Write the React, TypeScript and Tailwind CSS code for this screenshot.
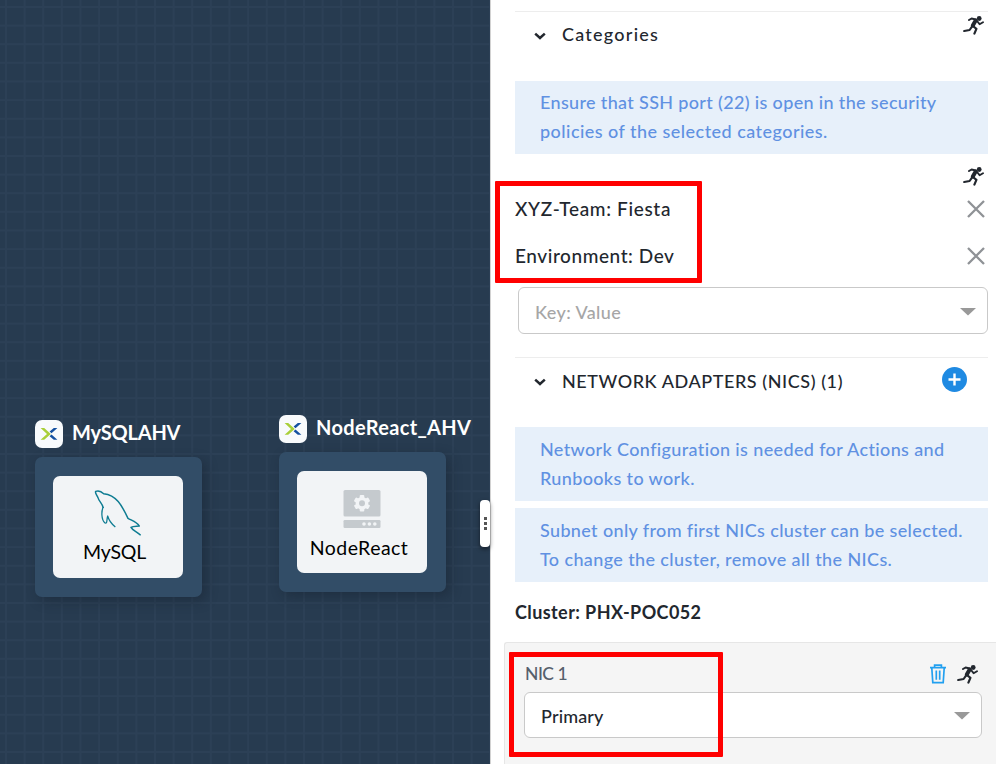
import type { ReactNode } from "react";

function Runner() {
  return (
    <svg width="21" height="19" viewBox="0 0 21 19" fill="none" stroke="#22272e" strokeLinecap="round" strokeLinejoin="round">
      <circle cx="16.2" cy="2.5" r="2.4" fill="#22272e" stroke="none" />
      <path d="M6 4 8.6 2.5 12.8 3.4" strokeWidth="2" />
      <path d="M12.7 4.6 9.8 9.6" strokeWidth="4" />
      <path d="M14 5 16.6 8.2 20 6.2" strokeWidth="1.9" />
      <path d="M10 10 13.4 12.8 11.4 17.6" strokeWidth="2.2" />
      <path d="M8.8 10.8 6.6 14 1.2 15" strokeWidth="2.1" />
    </svg>
  );
}

function Chevron() {
  return (
    <svg width="12" height="8" viewBox="0 0 12 8" fill="none" stroke="#22272e" strokeWidth="2.5">
      <path d="M1.2 1.6 6 6 10.8 1.6" />
    </svg>
  );
}

function Cross() {
  return (
    <svg className="-mt-[2px]" width="18" height="18" viewBox="0 0 18 18" fill="none" stroke="#8f9296" strokeWidth="2.3">
      <path d="M1 1 17 17M17 1 1 17" />
    </svg>
  );
}

function Caret() {
  return (
    <svg className="mt-[2px]" width="16" height="8" viewBox="0 0 16 8" fill="#999">
      <path d="M0 0H16L8 7.6Z" />
    </svg>
  );
}

function Trash() {
  return (
    <svg width="16" height="20" viewBox="0 0 16 20" fill="none" stroke="#22a0f0" strokeWidth="1.7">
      <path d="M0 3.6H16M4.6 3.4V1.2H11.4V3.4M1.8 4 2.8 18.6H13.2L14.2 4M6.3 6.6V15.8M9.7 6.6V15.8" />
    </svg>
  );
}

function BrandBadge() {
  return (
    <span className="flex size-7 shrink-0 items-center justify-center rounded-[7px] bg-[#f8fafc]">
      <svg width="28" height="28" viewBox="0 0 28 28">
        <path d="M5.6 8H9.2L15.8 13.9 9.2 19.8H5.6L12 13.9Z" fill="#a9cf38" />
        <path d="M22.4 8H18.8L14.6 11.6 16.5 13.2ZM22.4 19.8H18.8L14.6 16.2 16.5 14.6Z" fill="#1450a0" />
      </svg>
    </span>
  );
}

function Dolphin() {
  return (
    <svg width="50" height="48" viewBox="0 0 150 144" fill="none" stroke="#0e7c92" strokeWidth="4.4" strokeLinejoin="round">
      <path d="M31 57C28 42 18 38 15 26 12 18 5 12 8 7 16 4 25 7 32 14 70 18 86 48 105 88 118 95 132 99 139 111 129 112 120 111 114 115 119 125 132 128 143 139" />
      <path d="M31 54C25 64 24 92 36 102 44 104 40 94 44 81 49 99 57 106 67 114" strokeWidth="3.8" />
    </svg>
  );
}

function ServiceIcon() {
  return (
    <svg width="38" height="38" viewBox="0 0 38 38">
      <rect x="0.5" y="0" width="37" height="26.5" rx="1.6" fill="#c5cace" />
      <rect x="0.5" y="30" width="37" height="8" rx="1.2" fill="#c5cace" />
      <g fill="#f2f4f6">
        <circle cx="19" cy="13.3" r="6.3" />
        <rect x="16.7" y="5.1" width="4.6" height="16.4" rx="1" />
        <rect x="16.7" y="5.1" width="4.6" height="16.4" rx="1" transform="rotate(60 19 13.3)" />
        <rect x="16.7" y="5.1" width="4.6" height="16.4" rx="1" transform="rotate(120 19 13.3)" />
        <circle cx="21" cy="34" r="1.8" />
        <circle cx="26.4" cy="34" r="1.8" />
        <circle cx="31.8" cy="34" r="1.8" />
      </g>
      <circle cx="19" cy="13.3" r="3" fill="#c5cace" />
    </svg>
  );
}

function Node({ place, title, titleClass, name, nameClass, icon }: { place: string; title: string; titleClass: string; name: string; nameClass: string; icon: ReactNode }) {
  return (
    <div className={`absolute w-[167px] ${place}`}>
      <div className="flex h-7 items-center gap-[9px] whitespace-nowrap">
        <BrandBadge />
        <span className={`-mt-1 text-[20px] leading-6 font-bold text-white ${titleClass}`}>{title}</span>
      </div>
      <div className="mt-[9px] flex h-[140px] items-center justify-center rounded-[7px] bg-[#324d67] shadow-[4px_4px_12px_rgba(20,30,42,0.4)]">
        <div className="mr-px flex h-[102px] w-[130px] flex-col items-center rounded-[7px] bg-[#f2f4f6]">
          {icon}
          <span className={`text-[19.5px] leading-6 text-black ${nameClass}`}>{name}</span>
        </div>
      </div>
    </div>
  );
}

function Info({ children }: { children: ReactNode }) {
  return <div className="w-[473px] bg-[#e7f0fa] pl-[25px] text-[18px] leading-[29px] font-medium whitespace-nowrap text-[#6091e2]">{children}</div>;
}

export default function App() {
  return (
    <div className="relative flex h-[764px] w-[998px] overflow-hidden bg-white font-['Lato',sans-serif] [font-variant-ligatures:none]">
      <div className="relative w-[490px] shrink-0 bg-[#273b50] bg-[linear-gradient(to_right,#2c4056_2px,transparent_2px),linear-gradient(to_bottom,#2c4056_2px,transparent_2px)] [background-position:5px_6px] [background-size:18.64px_18.64px]">
        <Node place="top-[420px] left-[35px]" title="MySQLAHV" titleClass="tracking-[-0.2px]" name="MySQL" nameClass="mt-[3px] -ml-[7px] tracking-[-0.2px]"
          icon={<div className="mt-[13px] flex h-[48px]"><Dolphin /></div>} />
        <Node place="top-[415px] left-[279px]" title="NodeReact_AHV" titleClass="tracking-[0.33px]" name="NodeReact" nameClass="mt-[8px] -ml-[6px] tracking-[0.44px]"
          icon={<div className="mt-[19px] flex h-[38px]"><ServiceIcon /></div>} />
        <div className="absolute top-[500px] right-0 flex h-[47px] w-[10px] flex-col items-center justify-center gap-[2px] rounded-[4px] bg-white shadow-[0_2px_4px_rgba(0,0,0,0.5)]">
          <i className="size-[3px] bg-[#555]" />
          <i className="size-[3px] bg-[#555]" />
          <i className="size-[3px] bg-[#555]" />
        </div>
      </div>

      <div className="flex w-[508px] flex-col border-l border-[#d2d2d2] bg-white pt-[11px] text-[#22272e]">
        <section className="ml-6 flex h-[70px] w-[473px] items-start justify-between border-t border-[#ededed]">
          <div className="mt-[10px] ml-[19px] flex items-center gap-[16px]">
            <div className="mt-[3px]"><Chevron /></div>
            <h2 className="text-[18px] leading-6 font-medium tracking-[1.25px]">Categories</h2>
          </div>
          <div className="mt-1 mr-1"><Runner /></div>
        </section>
        <div className="ml-6 flex h-[73px] flex-col">
          <Info>
            <p className="pt-[7px] tracking-[0.34px]">Ensure that SSH port (22) is open in the security</p>
            <p className="pb-[8px] tracking-[0.46px]">policies of the selected categories.</p>
          </Info>
        </div>
        <div className="mt-[13px] flex h-[19px] justify-end pr-[14px]"><Runner /></div>
        <div className="ml-6 flex h-[47px] w-[470px] items-center justify-between text-[19px] font-medium">
          <span className="tracking-[0.66px]">XYZ-Team: Fiesta</span><Cross />
        </div>
        <div className="ml-6 flex h-[47px] w-[470px] items-center justify-between text-[19px] font-medium">
          <span className="tracking-[0.57px]">Environment: Dev</span><Cross />
        </div>
        <div className="mt-[7px] ml-[27px] flex h-[47px] w-[470px] items-center justify-between rounded-[6px] border border-[#c9c9c9] pr-[11px] pl-4">
          <span className="mt-[3px] text-[18px] font-medium tracking-[0.4px] text-[#a6a6a6]">Key: Value</span><Caret />
        </div>
        <section className="mt-[23px] ml-6 flex h-[70px] w-[473px] items-start justify-between border-t border-[#ededed]">
          <div className="mt-[11px] ml-[19px] flex items-center gap-[16px]">
            <div className="mt-px"><Chevron /></div>
            <h2 className="text-[18px] leading-6 font-medium tracking-[0.57px]">NETWORK ADAPTERS (NICS) (1)</h2>
          </div>
          <div className="mt-[9px] mr-[21px] flex size-[25px] items-center justify-center rounded-full bg-[#1f8ae2]">
            <svg width="13" height="13" viewBox="0 0 13 13" stroke="#fff" strokeWidth="2.4"><path d="M.5 6.5H12.5M6.5.5V12.5" /></svg>
          </div>
        </section>
        <div className="ml-6 flex flex-col gap-[7px]">
          <Info>
            <p className="pt-[8px] tracking-[0.36px]">Network Configuration is needed for Actions and</p>
            <p className="pb-[8px] tracking-[0.36px]">Runbooks to work.</p>
          </Info>
          <Info>
            <p className="pt-[8px] tracking-[0.36px]">Subnet only from first NICs cluster can be selected.</p>
            <p className="pb-[8px] tracking-[0.38px]">To change the cluster, remove all the NICs.</p>
          </Info>
        </div>
        <div className="ml-6 flex h-[60px] items-center pt-px text-[18px] font-bold tracking-[0.41px]">Cluster: PHX-POC052</div>
        <div className="ml-[13px] flex w-[492px] flex-1 flex-col rounded-tl-[3px] border-t border-l border-[#e6e6e6] bg-[#f5f5f5] pl-[19px]">
          <div className="mt-[20px] flex h-[22px] w-[454px] items-center justify-between">
            <span className="ml-[1px] text-[17.5px] font-medium tracking-[-0.5px] text-[#56606c]">NIC 1</span>
            <div className="flex items-center gap-[11px]"><Trash /><Runner /></div>
          </div>
          <div className="mt-[7px] flex h-[46px] w-[458px] items-center justify-between rounded-[6px] border border-[#c9c9c9] bg-white pr-[11px] pl-[16px]">
            <span className="mt-[2px] text-[18px] font-medium tracking-[0.15px]">Primary</span><Caret />
          </div>
        </div>
      </div>

      <div className="absolute top-[181px] left-[495px] h-[102px] w-[207px] rounded-[1px] border-5 border-[#ff0000]" />
      <div className="absolute top-[652px] left-[509px] h-[105px] w-[214px] rounded-[1px] border-5 border-[#ff0000]" />
    </div>
  );
}
